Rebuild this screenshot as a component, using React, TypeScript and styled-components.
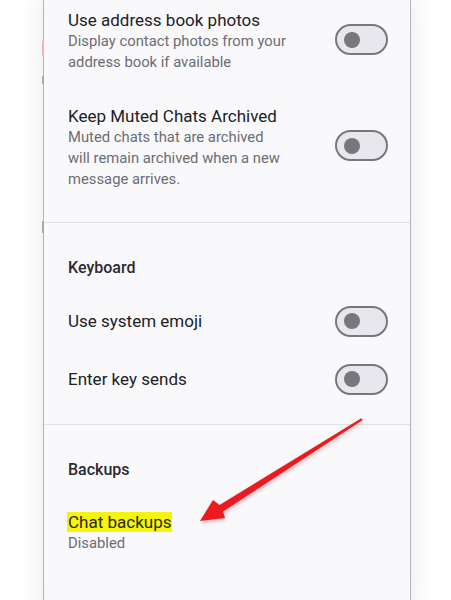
import React from "react";
import styled, { createGlobalStyle } from "styled-components";

const Global = createGlobalStyle`
  html, body { margin: 0; padding: 0; background: #ffffff; }
  body { font-family: Roboto, "Noto Sans", "Liberation Sans", sans-serif; overflow: hidden; }
`;

const Page = styled.div`
  width: 451px;
  height: 600px;
  overflow: hidden;
  background: #ffffff;
  position: relative;
`;

const Frame = styled.div`
  position: relative;
  margin-left: 43px;
  width: 366px;
  height: 620px;
  background: #f9f9fc;
  border-left: 1.5px solid #b4b4b8;
  border-right: 1.5px solid #b4b4b8;
  box-shadow: 0 0 28px rgba(0, 0, 0, 0.09);
`;

const SideMark = styled.div<{ $top: number; $h: number; $red?: boolean }>`
  position: absolute;
  left: -2px;
  top: ${(p) => p.$top}px;
  width: 2px;
  height: ${(p) => p.$h}px;
  background: ${(p) => (p.$red ? "#f2b4b8" : "#a8a8ae")};
`;

const Section = styled.div<{ $top?: number; $bottom?: number }>`
  padding-top: ${(p) => p.$top ?? 0}px;
  padding-bottom: ${(p) => p.$bottom ?? 0}px;
`;

const Divider = styled.div`
  height: 1px;
  background: #e2e2e6;
`;

const Header = styled.div`
  padding: 0 24px;
  font-size: 16px;
  line-height: 20px;
  font-weight: 500;
  color: #2a2a2e;
`;

const Row = styled.div<{ $pad?: number; $h?: number }>`
  display: flex;
  align-items: center;
  justify-content: space-between;
  padding: ${(p) => p.$pad ?? 0}px 22px ${(p) => p.$pad ?? 0}px 24px;
  min-height: ${(p) => p.$h ?? 0}px;
  box-sizing: border-box;
`;

const TextCol = styled.div`
  display: flex;
  flex-direction: column;
`;

const Title = styled.div`
  font-size: 17px;
  line-height: 22px;
  color: #202124;
`;

const Sub = styled.div<{ $w?: number }>`
  font-size: 14.8px;
  line-height: 21px;
  color: #6c6c72;
  max-width: ${(p) => p.$w ?? 240}px;
`;

const Mark = styled.span`
  background: #f4f40c;
  color: #2a2a10;
  padding: 0 1px;
  margin-left: -1px;
`;

const Toggle = styled.div<{ $shift?: number }>`
  flex: none;
  width: 53px;
  height: 31px;
  box-sizing: border-box;
  border: 2px solid #77777c;
  border-radius: 16px;
  background: #e7e7ed;
  display: flex;
  align-items: center;
  padding-left: 7px;
  margin-bottom: ${(p) => p.$shift ?? 0}px;
`;

const Knob = styled.div`
  width: 16px;
  height: 16px;
  border-radius: 50%;
  background: #77777c;
`;

const ArrowSvg = styled.svg`
  position: absolute;
  left: 0;
  top: 0;
  pointer-events: none;
  filter: drop-shadow(1px 2px 2px rgba(120, 0, 0, 0.25));
`;

type ToggleRowProps = { title: string; sub?: string; subW?: number; pad?: number; h?: number; shift?: number };

const ToggleRow = ({ title, sub, subW, pad, h, shift }: ToggleRowProps) => (
  <Row $pad={pad} $h={h}>
    <TextCol>
      <Title>{title}</Title>
      {sub && <Sub $w={subW}>{sub}</Sub>}
    </TextCol>
    <Toggle $shift={shift}>
      <Knob />
    </Toggle>
  </Row>
);

export default function App() {
  return (
    <Page>
      <Global />
      <Frame>
        <SideMark $top={48} $h={15} $red />
        <SideMark $top={83} $h={8} />
        <SideMark $top={228} $h={12} />
        <Section $top={0} $bottom={16} style={{ marginTop: -7 }}>
          <ToggleRow
            pad={16}
            title="Use address book photos"
            sub="Display contact photos from your address book if available"
            subW={235}
            shift={3}
          />
          <ToggleRow
            pad={16}
            title="Keep Muted Chats Archived"
            sub="Muted chats that are archived will remain archived when a new message arrives."
            subW={220}
            shift={4}
          />
        </Section>
        <Divider />
        <Section $top={35} $bottom={16}>
          <Header>Keyboard</Header>
          <div style={{ height: 14 }} />
          <ToggleRow title="Use system emoji" h={58} />
          <ToggleRow title="Enter key sends" h={58} />
        </Section>
        <Divider />
        <Section $top={35}>
          <Header>Backups</Header>
          <Row $pad={31}>
            <TextCol>
              <Title>
                <Mark>Chat backups</Mark>
              </Title>
              <Sub>Disabled</Sub>
            </TextCol>
          </Row>
        </Section>
      </Frame>
      <ArrowSvg width="451" height="600" viewBox="0 0 451 600">
        <polygon
          points="200,521 213,500 219.5,505 361.3,418.3 362.7,419.9 223,511.5 225,518"
          fill="#ec1a1f"
        />
      </ArrowSvg>
    </Page>
  );
}
